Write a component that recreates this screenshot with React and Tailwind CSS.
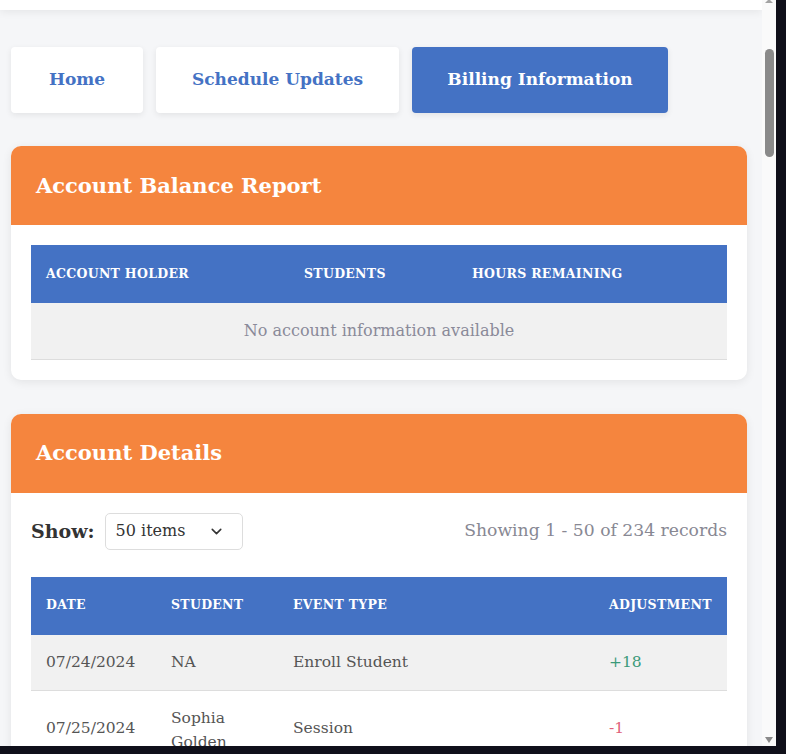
import React from 'react';

const font = { fontFamily: '"DejaVu Serif", "Liberation Serif", serif' };

function Tab({ label, active, width }) {
  return (
    <button
      className={
        'h-[66px] rounded-[4px] text-[17px] font-semibold shadow-[0_2px_6px_rgba(0,0,0,0.08)] ' +
        width +
        (active ? ' bg-[#4472c4] text-white' : ' bg-white text-[#4472c4]')
      }
    >
      {label}
    </button>
  );
}

function Card({ title, children }) {
  return (
    <div className="bg-white rounded-[10px] shadow-[0_2px_10px_rgba(0,0,0,0.08)] overflow-hidden">
      <div className="bg-[#f5853e] h-[79px] flex items-center px-[25px]">
        <h2 className="text-white text-[21px] font-semibold">{title}</h2>
      </div>
      {children}
    </div>
  );
}

const th = 'px-[15px] text-left text-[12.5px] font-bold text-white uppercase tracking-[0.3px]';
const td = 'px-[15px] text-[15.5px] text-[#555] font-light';

export default function App() {
  return (
    <div className="w-[786px] h-[754px] bg-[#10101a] overflow-hidden" style={font}>
      <div className="flex w-[776px] h-[746px]">
        <div className="w-[762px] h-full overflow-hidden bg-[#f5f6f8]">
          <div className="h-[10px] bg-white shadow-[0_2px_8px_rgba(0,0,0,0.07)]" />

          <div className="px-[11px] pt-[37px]">
            <div className="flex gap-[13px]">
              <Tab label="Home" width="w-[132px]" />
              <Tab label="Schedule Updates" width="w-[243px]" />
              <Tab label="Billing Information" width="w-[256px]" active />
            </div>

            <div className="mt-[33px] w-[736px]">
              <Card title="Account Balance Report">
                <div className="p-[20px]">
                  <table className="w-full border-collapse">
                    <thead>
                      <tr className="bg-[#4472c4] h-[58px]">
                        <th className={th + ' w-[258px]'}>Account Holder</th>
                        <th className={th + ' w-[168px]'}>Students</th>
                        <th className={th}>Hours Remaining</th>
                      </tr>
                    </thead>
                    <tbody>
                      <tr className="bg-[#f1f1f1] h-[56px] border-b border-[#dddddd]">
                        <td colSpan={3} className="text-center text-[16px] text-[#8a8a99] font-light">
                          No account information available
                        </td>
                      </tr>
                    </tbody>
                  </table>
                </div>
              </Card>
            </div>

            <div className="mt-[34px] w-[736px]">
              <Card title="Account Details">
                <div className="px-[20px] pt-[20px]">
                  <div className="flex items-center justify-between">
                    <div className="flex items-center gap-[10px]">
                      <span className="text-[19px] font-semibold text-[#333]">Show:</span>
                      <div className="w-[138px] h-[37px] border border-[#dddddd] rounded-[5px] flex items-center justify-between pl-[10px] pr-[17px]">
                        <span className="text-[16px] text-[#333]">50 items</span>
                        <svg width="17" height="17" viewBox="0 0 24 24" fill="none" stroke="#333" strokeWidth="2.2" strokeLinecap="round" strokeLinejoin="round">
                          <path d="M6 9l6 6 6-6" />
                        </svg>
                      </div>
                    </div>
                    <span className="text-[17.2px] text-[#888893] font-light">Showing 1 - 50 of 234 records</span>
                  </div>

                  <table className="w-full border-collapse mt-[27px]">
                    <thead>
                      <tr className="bg-[#4472c4] h-[58px]">
                        <th className={th + ' w-[125px]'}>Date</th>
                        <th className={th + ' w-[122px]'}>Student</th>
                        <th className={th + ' w-[316px]'}>Event Type</th>
                        <th className={th}>Adjustment</th>
                      </tr>
                    </thead>
                    <tbody>
                      <tr className="bg-[#f1f1f1] h-[56px] border-b border-[#dddddd]">
                        <td className={td}>07/24/2024</td>
                        <td className={td}>NA</td>
                        <td className={td}>Enroll Student</td>
                        <td className={td + ' !text-[#3a9a7a]'}>+18</td>
                      </tr>
                      <tr className="bg-white h-[76px]">
                        <td className={td}>07/25/2024</td>
                        <td className={td + ' leading-[24px] pt-[2px]'}>Sophia Golden</td>
                        <td className={td}>Session</td>
                        <td className={td + ' !text-[#e0607a]'}>-1</td>
                      </tr>
                    </tbody>
                  </table>
                </div>
              </Card>
            </div>
          </div>
        </div>

        <div className="w-[14px] h-full bg-[#fafafa] flex flex-col items-center">
          <div className="w-0 h-0 border-x-[4px] border-x-transparent border-b-[4px] border-b-[#a3a3a3] mt-[-1px]" />
          <div className="w-[9px] h-[108px] mt-[46px] rounded-full bg-[#8a8a8a]" />
          <div className="flex-1" />
          <div className="w-0 h-0 border-x-[4px] border-x-transparent border-t-[6px] border-t-[#8a8a8a] mb-[3px]" />
        </div>
      </div>
    </div>
  );
}
